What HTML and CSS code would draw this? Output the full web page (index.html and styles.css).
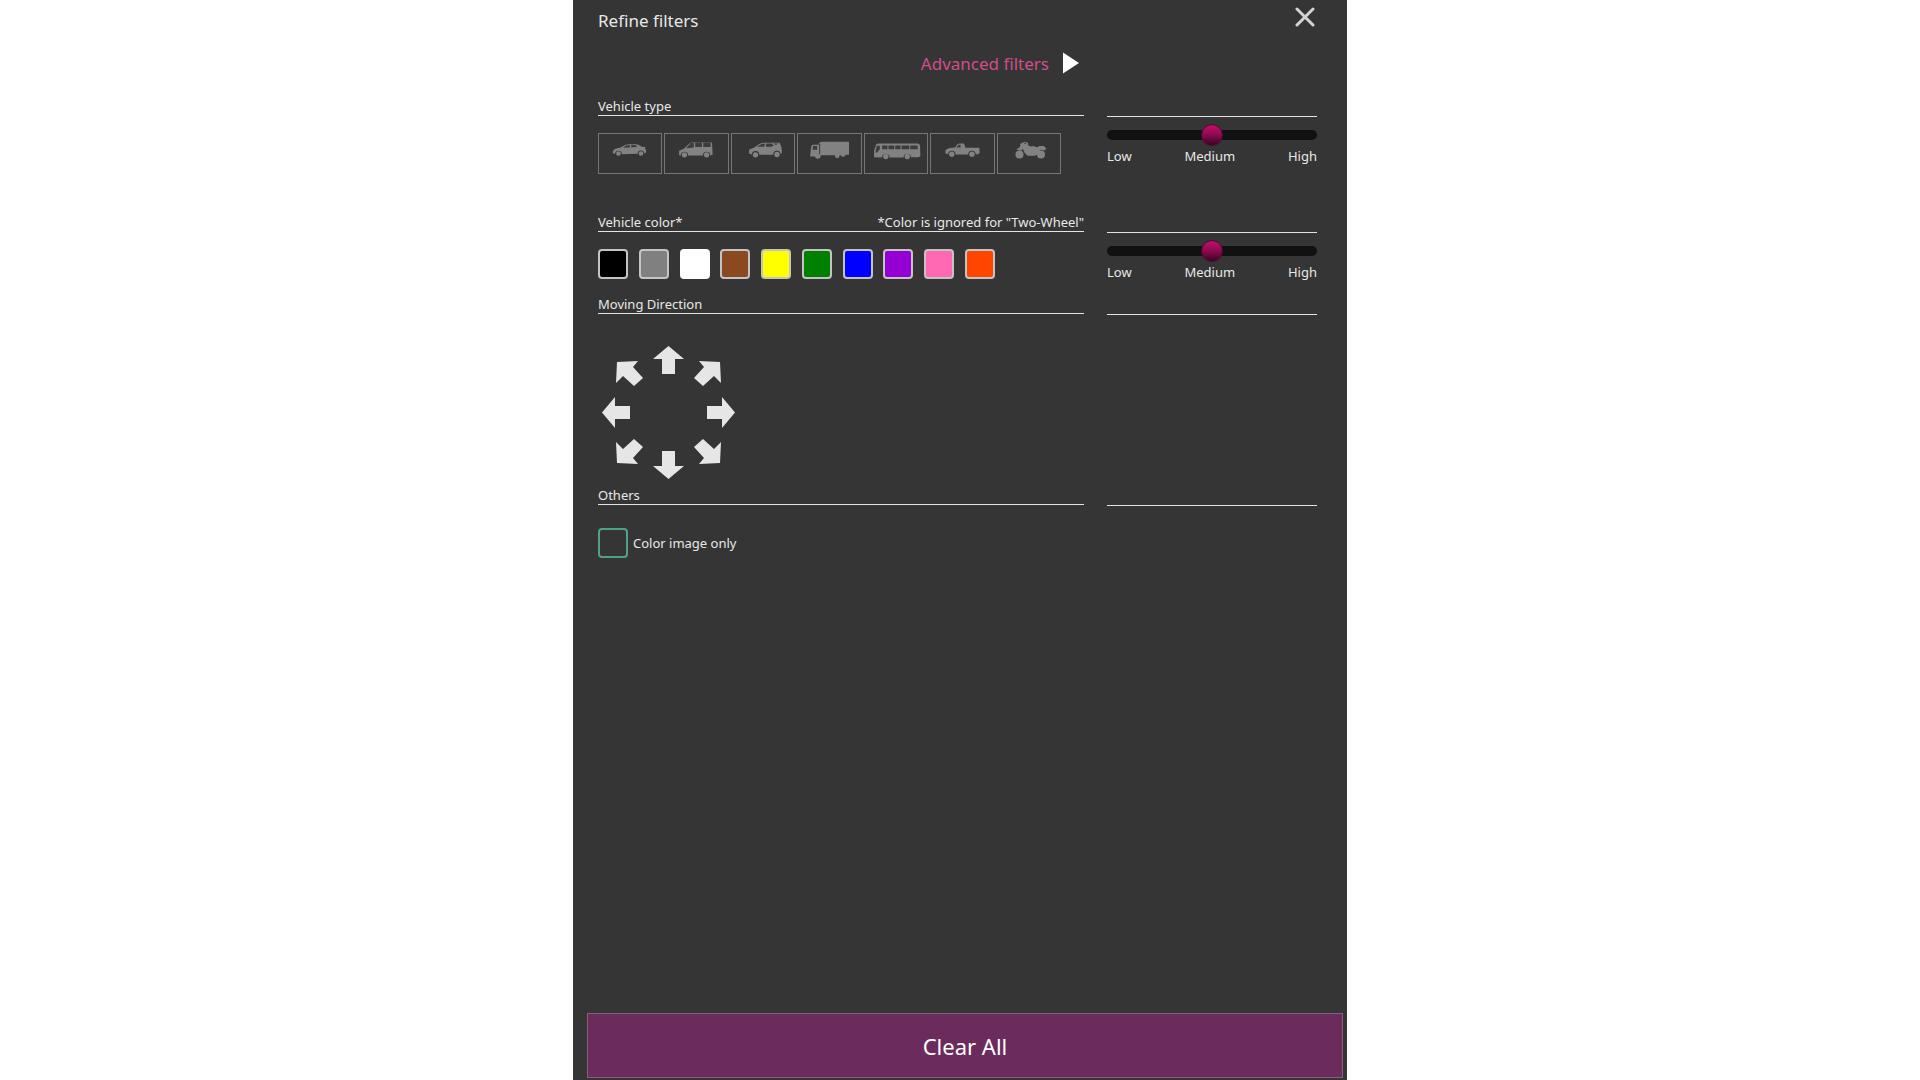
FILE: index.html
```html
<!DOCTYPE html>
<html lang="en">
<head>
    <meta charset="UTF-8">
    <meta name="viewport" content="width=device-width, initial-scale=1.0">
    <title>Refine filters</title>
    <link rel="stylesheet" href="styles.css">
</head>
<body>
    <form class="panel">
        <header class="panel-header">
            <h1 class="panel-title">Refine filters</h1>
            <button type="button" class="close-button" aria-label="Close">
                <svg width="20" height="20" viewBox="0 0 20 20"><path d="M2 2L18 18M18 2L2 18" fill="none" stroke="#d4d4d4" stroke-width="3" stroke-linecap="round"/></svg>
            </button>
        </header>

        <div class="advanced-row">
            <a href="#advanced" class="advanced-link">
                Advanced filters
                <svg width="16" height="22" viewBox="0 0 16 22"><path d="M0 0.5L16 11L0 21.5Z" fill="#fff"/></svg>
            </a>
        </div>

        <!-- Vehicle type -->
        <section class="filter-row type-row">
            <div class="filter-main">
                <div class="filter-head"><h2>Vehicle type</h2></div>
                <div class="type-list">
                    <button type="button" class="type-button" aria-label="Sedan">
                        <svg viewBox="3 3 186 114">
                            <path d="M44 57C44 49 50 45 66 43L78 36Q88 32 108 32Q122 33 130 40L141 41L140 44Q145 48 143 57L138 61A10 10 0 0 0 118 61L71 62A10 10 0 0 0 51 61L45 60Z"/>
                            <circle cx="61" cy="60" r="7"/><circle cx="128" cy="60" r="7"/>
                            <path class="glass" d="M74 43L83 37Q88 35 95 35V42ZM99 34H107Q114 35 118 40L99 42Z"/>
                        </svg>
                    </button>
                    <button type="button" class="type-button" aria-label="Van">
                        <svg viewBox="3 3 186 114">
                            <path d="M45 65V52L59 46L75 31Q79 27 86 27H143L145 64L138 66A11 11 0 0 0 116 66H72A11 11 0 0 0 50 66Z"/>
                            <circle cx="61" cy="64" r="8"/><circle cx="127" cy="64" r="8"/>
                            <path class="glass" d="M66 44L80 29H89V42ZM93 28H113V41H93ZM117 28H139V41H117Z"/>
                        </svg>
                    </button>
                    <button type="button" class="type-button" aria-label="SUV">
                        <svg viewBox="3 3 186 114">
                            <path d="M54 61V48L68 43L86 31Q90 28 98 28H145L150 40L152 57L148 62A11 11 0 0 0 126 64H84A11 11 0 0 0 62 63Z"/>
                            <circle cx="73" cy="64" r="8"/><circle cx="137" cy="63" r="8"/>
                            <path class="glass" d="M78 40L92 31H102L98 40ZM106 30H120L128 36L121 40H103ZM125 30H141L134 35Z"/>
                        </svg>
                    </button>
                    <button type="button" class="type-button" aria-label="Truck">
                        <svg viewBox="3 3 186 114">
                            <path d="M39 69L42 40L46 34H65V30L71 25H155V64H145A8 8 0 0 1 130 65H70A8 8 0 0 1 54 69Z"/>
                            <circle cx="61" cy="68" r="7"/><circle cx="120" cy="67" r="7"/>
                            <path class="glass" d="M48 38H60V49H46ZM66 31H69V62H66Z"/>
                        </svg>
                    </button>
                    <button type="button" class="type-button" aria-label="Bus">
                        <svg viewBox="3 3 186 114">
                            <path d="M30 71V52L36 33Q38 30 44 30H160Q166 31 167 37L168 68L162 71H140A11 11 0 0 0 118 72H76A11 11 0 0 0 54 72Z"/>
                            <circle cx="65" cy="69" r="8"/><circle cx="129" cy="69" r="8"/>
                            <path class="glass" d="M38 37H47V47L39 57H34ZM54 36H70V47H54ZM73 36H90V47H73ZM93 36H109V47H93ZM112 36H135V47H112ZM138 36H160V47H138Z"/>
                        </svg>
                    </button>
                    <button type="button" class="type-button" aria-label="Pickup">
                        <svg viewBox="3 3 186 114">
                            <path d="M46 60V50Q51 43 75 42L82 32Q84 30 89 30H101L106 43H147L148 58L144 62H136A11 11 0 0 0 114 63H76A11 11 0 0 0 54 62Z"/>
                            <circle cx="65" cy="62" r="8"/><circle cx="125" cy="62" r="8"/>
                            <path class="glass" d="M79 42L85 34H91V42Z"/>
                        </svg>
                    </button>
                    <button type="button" class="type-button" aria-label="Two-Wheel">
                        <svg viewBox="3 3 186 114">
                            <circle cx="67" cy="63" r="12"/><circle cx="131" cy="63" r="12"/>
                            <path d="M57 48L67 42L70 36L68 32L76 28L82 25L91 27L94 33L91 35L101 39L110 38L119 42L126 38L140 38L147 46L141 51L130 49L121 62L113 67H91L82 58L77 46L72 52Z"/>
                            <path class="glass" d="M80 28L85 28L87 32L82 31Z"/>
                        </svg>
                    </button>
                </div>
            </div>
            <div class="filter-side">
                <div class="filter-head"></div>
                <input type="range" class="slider" min="0" max="2" value="1" aria-label="Vehicle type accuracy">
                <div class="slider-labels"><span>Low</span><span>Medium</span><span>High</span></div>
            </div>
        </section>

        <!-- Vehicle color -->
        <section class="filter-row color-row">
            <div class="filter-main">
                <div class="filter-head">
                    <h2>Vehicle color*</h2>
                    <span>*Color is ignored for "Two-Wheel"</span>
                </div>
                <div class="color-list">
                    <button type="button" class="swatch black" aria-label="Black"></button>
                    <button type="button" class="swatch gray" aria-label="Gray"></button>
                    <button type="button" class="swatch white" aria-label="White"></button>
                    <button type="button" class="swatch brown" aria-label="Brown"></button>
                    <button type="button" class="swatch yellow" aria-label="Yellow"></button>
                    <button type="button" class="swatch green" aria-label="Green"></button>
                    <button type="button" class="swatch blue" aria-label="Blue"></button>
                    <button type="button" class="swatch purple" aria-label="Purple"></button>
                    <button type="button" class="swatch pink" aria-label="Pink"></button>
                    <button type="button" class="swatch orange" aria-label="Orange"></button>
                </div>
            </div>
            <div class="filter-side">
                <div class="filter-head"></div>
                <input type="range" class="slider" min="0" max="2" value="1" aria-label="Vehicle color accuracy">
                <div class="slider-labels"><span>Low</span><span>Medium</span><span>High</span></div>
            </div>
        </section>

        <!-- Moving direction -->
        <section class="filter-row direction-row">
            <div class="filter-main">
                <div class="filter-head"><h2>Moving Direction</h2></div>
                <div class="direction-pad">
                    <button type="button" class="arrow nw" aria-label="Up left"><svg class="diagonal" viewBox="0 0 27 26"><path d="M1 1L22 0L17 6L27 17L18 25L7 15L0 22Z"/></svg></button>
                    <button type="button" class="arrow n" aria-label="Up"><svg class="straight" viewBox="0 0 31 28"><path d="M15.5 0L31 13H22V28H9V13H0Z"/></svg></button>
                    <button type="button" class="arrow ne" aria-label="Up right"><svg class="diagonal" viewBox="0 0 27 26"><path d="M1 1L22 0L17 6L27 17L18 25L7 15L0 22Z"/></svg></button>
                    <button type="button" class="arrow w" aria-label="Left"><svg class="sideways" viewBox="0 0 28 31"><path d="M0 15.5L13 0V9H28V22H13V31Z"/></svg></button>
                    <span></span>
                    <button type="button" class="arrow e" aria-label="Right"><svg class="sideways" viewBox="0 0 28 31"><path d="M28 15.5L15 0V9H0V22H15V31Z"/></svg></button>
                    <button type="button" class="arrow sw" aria-label="Down left"><svg class="diagonal" viewBox="0 0 27 26"><path d="M1 1L22 0L17 6L27 17L18 25L7 15L0 22Z"/></svg></button>
                    <button type="button" class="arrow s" aria-label="Down"><svg class="straight" viewBox="0 0 31 28"><path d="M15.5 28L31 15H22V0H9V15H0Z"/></svg></button>
                    <button type="button" class="arrow se" aria-label="Down right"><svg class="diagonal" viewBox="0 0 27 26"><path d="M1 1L22 0L17 6L27 17L18 25L7 15L0 22Z"/></svg></button>
                </div>
            </div>
            <div class="filter-side"><div class="filter-head"></div></div>
        </section>

        <!-- Others -->
        <section class="filter-row">
            <div class="filter-main">
                <div class="filter-head"><h2>Others</h2></div>
                <div class="check-row">
                    <input type="checkbox" class="checkbox" id="colorOnly">
                    <label for="colorOnly">Color image only</label>
                </div>
            </div>
            <div class="filter-side"><div class="filter-head"></div></div>
        </section>

        <button type="reset" class="clear-button">Clear All</button>
    </form>
</body>
</html>
```
FILE: styles.css
```css
* {
    margin: 0;
    padding: 0;
    box-sizing: border-box;
}

body {
    background: #fff;
    color: #e8e8e8;
    font-family: "Noto Sans", "Open Sans", sans-serif;
    font-size: 13px;
}

button {
    background: none;
    border: none;
    font: inherit;
    color: inherit;
    cursor: pointer;
}

svg {
    display: block;
}

.panel {
    max-width: 774px;
    min-height: 100vh;
    margin: 0 auto;
    padding: 0 4px 2px 14px;
    background: #353535;
    display: flex;
    flex-direction: column;
}

/* Header */
.panel-header {
    display: flex;
    justify-content: space-between;
    align-items: flex-start;
    padding: 7px 28px 0 11px;
    height: 48px;
}

.panel-title {
    font-size: 17px;
    font-weight: 400;
    line-height: 28px;
}

.advanced-row {
    display: flex;
    justify-content: flex-end;
    height: 48px;
    padding-right: 264px;
}

.advanced-link {
    display: flex;
    align-items: center;
    gap: 14px;
    height: 30px;
    font-size: 17px;
    color: #d14d8b;
    text-decoration: none;
}

/* Filter rows */
.filter-row {
    display: grid;
    grid-template-columns: 1fr 210px;
    gap: 23px;
    padding: 0 26px 0 11px;
}

.type-row {
    min-height: 116px;
}

.color-row {
    min-height: 82px;
}

.direction-row {
    min-height: 191px;
}

.filter-side {
    padding-top: 1px;
}

.filter-head {
    display: flex;
    justify-content: space-between;
    height: 20px;
    line-height: 20px;
    border-bottom: 1px solid #e4e4e4;
}

.filter-head h2 {
    font-size: 13px;
    font-weight: 400;
}

/* Vehicle type */
.type-list {
    display: grid;
    grid-template-columns: repeat(7, 1fr);
    gap: 2px;
    max-width: 463px;
    margin-top: 17px;
}

.type-button {
    height: 41px;
    border: 1px solid #767676;
}

.type-button svg {
    width: 100%;
    height: 100%;
    fill: #828282;
}

.type-button .glass {
    fill: #3c3c3c;
}

/* Vehicle color */
.color-list {
    display: flex;
    justify-content: space-between;
    max-width: 397px;
    margin-top: 17px;
}

.swatch {
    width: 30px;
    height: 30px;
    border: 2px solid #c4c4c4;
    border-radius: 4px;
}

.black { background: #000; }
.gray { background: #808080; }
.white { background: #fff; border-color: #fff; }
.brown { background: #8b4922; }
.yellow { background: #ff0; }
.green { background: #008000; }
.blue { background: #00f; }
.purple { background: #9400d3; }
.pink { background: #ff69b4; }
.orange { background: #ff4500; }

/* Accuracy slider */
.slider {
    display: block;
    width: 100%;
    height: 22px;
    margin-top: 7px;
    background: none;
    appearance: none;
    -webkit-appearance: none;
}

.slider::-webkit-slider-runnable-track {
    height: 10px;
    background: #111;
    border-radius: 5px;
}

.slider::-webkit-slider-thumb {
    -webkit-appearance: none;
    width: 22px;
    height: 22px;
    margin-top: -6px;
    background: linear-gradient(#c40c70, #8c0a50 50%, #3c0422);
    border: 1px solid #4a0a2c;
    border-radius: 50%;
}

.slider-labels {
    display: flex;
    justify-content: space-between;
    line-height: 20px;
}

/* Moving direction */
.direction-pad {
    display: grid;
    grid-template-columns: 41px 51px 41px;
    grid-template-rows: 41px 51px 41px;
    margin: 32px 0 0 4px;
}

.arrow {
    align-self: center;
    justify-self: center;
}

.arrow svg {
    fill: #e6e6e6;
}

.straight { width: 31px; height: 28px; }
.sideways { width: 28px; height: 31px; }
.diagonal { width: 27px; height: 26px; }

.n { align-self: start; }
.s { align-self: end; }
.w { justify-self: start; }
.e { justify-self: end; }
.nw { place-self: end; }
.ne { place-self: end start; transform: scaleX(-1); }
.sw { place-self: start end; transform: scaleY(-1); }
.se { place-self: start; transform: scale(-1); }

/* Others */
.check-row {
    display: flex;
    align-items: center;
    gap: 5px;
    margin-top: 23px;
}

.checkbox {
    width: 30px;
    height: 30px;
    border: 2px solid #4fa18c;
    border-radius: 4px;
    appearance: none;
    -webkit-appearance: none;
}

.checkbox:checked {
    background: #4fa18c;
}

/* Footer */
.clear-button {
    height: 65px;
    margin-top: auto;
    background: #6b2b5c;
    border: 1px solid #85607c;
    color: #fff;
    font-size: 22px;
}
```
